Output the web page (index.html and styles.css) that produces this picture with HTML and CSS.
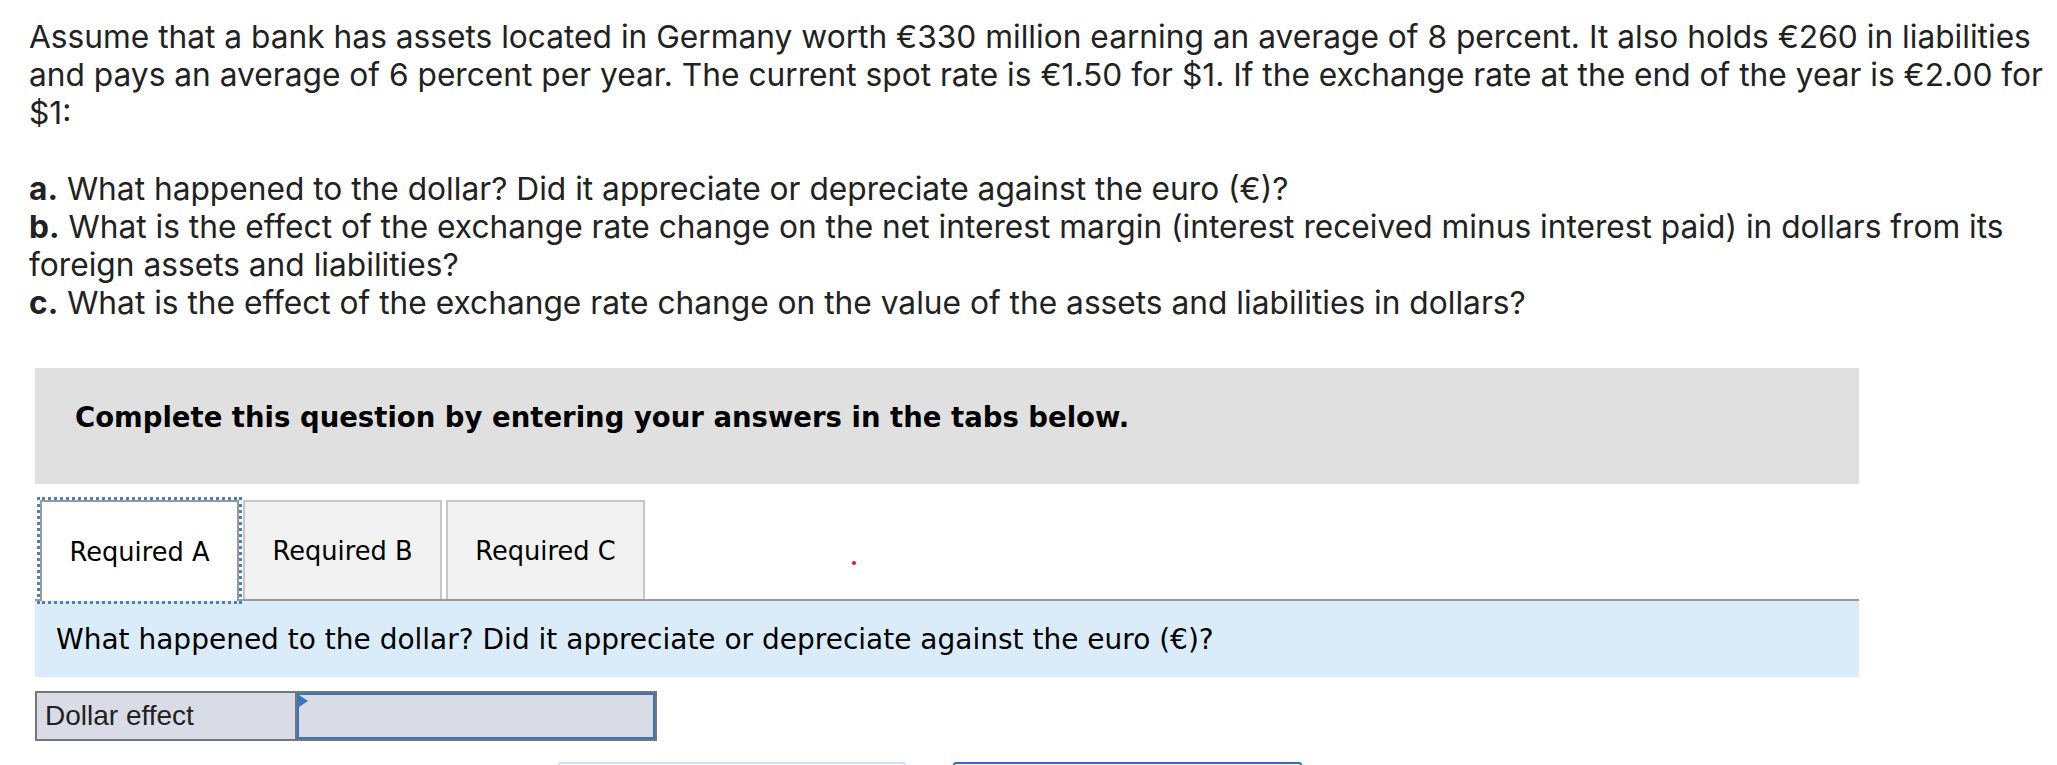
FILE: index.html
```html
<!DOCTYPE html>
<html lang="en">
<head>
<meta charset="utf-8">
<title>Question</title>
<link rel="stylesheet" href="styles.css">
</head>
<body>
<div class="question">
  <p class="para">Assume that a bank has assets located in Germany worth €330 million earning an average of 8 percent. It also holds €260 in liabilities and pays an average of 6 percent per year. The current spot rate is €1.50 for $1. If the exchange rate at the end of the year is €2.00 for $1:</p>
  <p class="para"><b>a.</b> What happened to the dollar? Did it appreciate or depreciate against the euro (€)?<br><b>b.</b> What is the effect of the exchange rate change on the net interest margin (interest received minus interest paid) in dollars from its foreign assets and liabilities?<br><b>c.</b> What is the effect of the exchange rate change on the value of the assets and liabilities in dollars?</p>
</div>
<div class="panel">
  <div class="instructions">Complete this question by entering your answers in the tabs below.</div>
  <div class="tabs">
    <div class="tab active">Required A</div>
    <div class="tab">Required B</div>
    <div class="tab">Required C</div>
    <span class="red-dot"></span>
  </div>
  <div class="prompt">What happened to the dollar? Did it appreciate or depreciate against the euro (€)?</div>
  <div class="answer">
    <div class="answer-label">Dollar effect</div>
    <div class="answer-input"></div>
  </div>
  <div class="nav">
    <div class="nav-btn prev"></div>
    <div class="nav-btn next"></div>
  </div>
</div>
</body>
</html>
```
FILE: styles.css
```css
html, body {
  margin: 0;
  padding: 0;
  background: #ffffff;
}
body {
  overflow: hidden;
}
.question {
  padding: 18px 0 8px 29px;
  font-family: "Inter", "Lato", "Liberation Sans", sans-serif;
  font-size: 31.7px;
  line-height: 38px;
  color: #222222;
}
.para {
  margin: 0 0 38px 0;
}
.para b {
  font-weight: 700;
}
.panel {
  margin: 0 0 0 35px;
  width: 1824px;
}
.instructions {
  background: #e0e0e0;
  height: 116px;
  box-sizing: border-box;
  padding: 33px 0 0 40px;
  font-family: "DejaVu Sans", Verdana, sans-serif;
  font-weight: 700;
  font-size: 27.5px;
  line-height: 32px;
  color: #000000;
}
.tabs {
  position: relative;
  display: flex;
  gap: 4px;
  margin-top: 16px;
  padding-left: 5px;
  border-bottom: 2px solid #999999;
  height: 99px;
}
.tab {
  width: 199px;
  box-sizing: border-box;
  border: 2px solid #c6c6c6;
  border-bottom: none;
  background: #f2f2f2;
  display: flex;
  align-items: center;
  justify-content: center;
  font-family: "DejaVu Sans", Verdana, sans-serif;
  font-size: 25.7px;
  color: #000000;
}
.tab.active {
  background: #ffffff;
  border-color: #999999;
  height: 101px;
  margin-bottom: -2px;
  outline: 3px dotted #4a7fc4;
  outline-offset: 0;
}
.red-dot {
  position: absolute;
  left: 817px;
  top: 61px;
  width: 4px;
  height: 4px;
  border-radius: 50%;
  background: #e8161b;
}
.prompt {
  background: #daecf9;
  height: 76px;
  box-sizing: border-box;
  padding-left: 21px;
  display: flex;
  align-items: center;
  font-family: "DejaVu Sans", Verdana, sans-serif;
  font-size: 28px;
  color: #000000;
}
.answer {
  display: flex;
  margin-top: 14px;
  width: 622px;
  height: 50px;
  box-sizing: border-box;
  border: 2px solid #777777;
  background: #d9dce6;
}
.answer-label {
  width: 260px;
  border-right: 2px solid #777777;
  box-sizing: border-box;
  padding-left: 8px;
  display: flex;
  align-items: center;
  font-family: "Liberation Sans", Arial, sans-serif;
  font-size: 28px;
  color: #222222;
}
.answer-input {
  position: relative;
  flex: 1;
  border: 2px solid #3a76bf;
}
.answer-input::before {
  content: "";
  position: absolute;
  left: 0;
  top: 0;
  border-top: 6px solid transparent;
  border-bottom: 6px solid transparent;
  border-left: 9px solid #3a76bf;
}
.nav {
  display: flex;
  gap: 47px;
  margin-top: 21px;
  padding-left: 523px;
}
.nav-btn {
  width: 348px;
  height: 50px;
  box-sizing: border-box;
  border: 2px solid #cfe3f5;
  border-radius: 3px;
}
.nav-btn.next {
  border-color: #2d6fb6;
  width: 349px;
}
```
